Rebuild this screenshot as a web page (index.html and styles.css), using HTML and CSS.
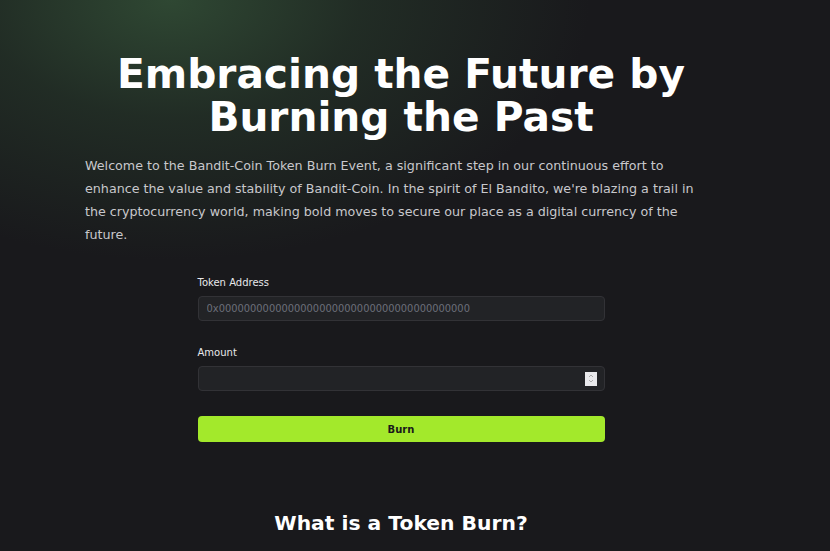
FILE: index.html
```html
<!DOCTYPE html>
<html lang="en">
<head>
<meta charset="utf-8">
<title>Bandit-Coin Token Burn</title>
<link rel="stylesheet" href="styles.css">
</head>
<body>
<main class="page">
  <section class="hero">
    <h1 class="title">Embracing the Future by<br>Burning the Past</h1>
    <p class="intro">Welcome to the Bandit-Coin Token Burn Event, a significant step in our continuous effort to enhance the value and stability of Bandit-Coin. In the spirit of El Bandito, we're blazing a trail in the cryptocurrency world, making bold moves to secure our place as a digital currency of the future.</p>
  </section>
  <form class="burn-form">
    <label class="field">
      <span class="label">Token Address</span>
      <input class="input" type="text" placeholder="0x0000000000000000000000000000000000000000">
    </label>
    <label class="field">
      <span class="label">Amount</span>
      <span class="input number">
        <span class="spinner"><svg width="8" height="11" viewBox="0 0 8 11"><path d="M2 4 L4 2 L6 4 M2 7 L4 9 L6 7" fill="none" stroke="#9a9a9a" stroke-width="0.8"/></svg></span>
      </span>
    </label>
    <button class="btn" type="button">Burn</button>
  </form>
  <h2 class="subtitle">What is a Token Burn?</h2>
</main>
</body>
</html>
```
FILE: styles.css
```css
html, body {
  margin: 0;
  height: 100%;
}
body {
  background-color: #19191c;
  background-image: radial-gradient(ellipse 420px 260px at 170px 0px, rgba(48, 74, 52, 0.95) 0%, rgba(40, 60, 44, 0.55) 45%, rgba(25, 25, 28, 0) 100%);
  background-repeat: no-repeat;
  color: #fff;
  font-family: "DejaVu Sans", sans-serif;
  overflow: hidden;
}
.page {
  padding: 53px 113px 0 85px;
  display: flex;
  flex-direction: column;
}
.hero {
  display: flex;
  flex-direction: column;
}
.title {
  margin: 0;
  font-family: "DejaVu Sans", sans-serif;
  font-weight: 700;
  font-size: 40.7px;
  line-height: 42.5px;
  text-align: center;
  color: #fff;
}
.intro {
  margin: 16px 0 0;
  font-size: 12.7px;
  line-height: 23px;
  color: #c8c8cc;
}
.burn-form {
  width: 407px;
  margin: 30px auto 0;
  display: flex;
  flex-direction: column;
}
.field {
  display: flex;
  flex-direction: column;
  margin-bottom: 25px;
}
.label {
  font-size: 10px;
  line-height: 14px;
  color: #e8e8ea;
  margin-bottom: 6px;
}
.input {
  box-sizing: border-box;
  height: 25px;
  border: 1px solid #323236;
  border-radius: 4px;
  background: #222326;
  padding: 0 8px;
  font-family: "DejaVu Sans", sans-serif;
  font-size: 9.9px;
  color: #fff;
  outline: none;
}
.input::placeholder {
  color: #6c6f7a;
}
.number {
  display: flex;
  align-items: center;
  justify-content: flex-end;
  padding: 0 7px;
}
.spinner {
  width: 12px;
  height: 14px;
  background: #e9e9ec;
  display: flex;
  align-items: center;
  justify-content: center;
}
.btn {
  height: 26px;
  border: 0;
  border-radius: 4px;
  background: #a3e92b;
  color: #1a1a1a;
  font-family: "DejaVu Sans", sans-serif;
  font-weight: 700;
  font-size: 10px;
  padding: 0;
}
.subtitle {
  margin: 69px 0 0;
  text-align: center;
  font-family: "DejaVu Sans", sans-serif;
  font-weight: 700;
  font-size: 20.3px;
  color: #fff;
}
```
